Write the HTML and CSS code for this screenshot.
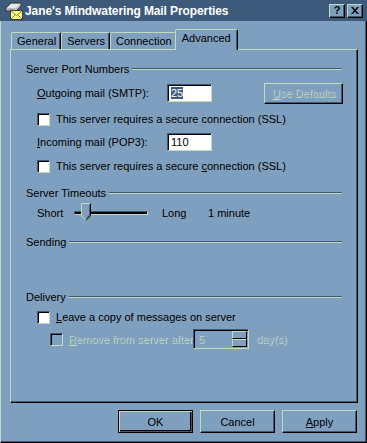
FILE: index.html
```html
<!doctype html>
<html>
<head>
    <meta charset="UTF-8">
    <title>Jane's Mindwatering Mail Properties</title>
    <link rel="stylesheet" href="styles.css">
</head>
<body>
<div class="window">
    <div class="titlebar">
        <svg class="app-icon" width="18" height="18" viewBox="0 0 18 18">
            <!-- server box -->
            <polygon points="1,6 6,1 16,1 16,4 11,9 1,9" fill="#c0c0c0" stroke="#404040" stroke-width="1"/>
            <polygon points="2,6 6,2 15,2 11,6" fill="#e8e8e8"/>
            <line x1="3" y1="8" x2="9" y2="8" stroke="#808080"/>
            <!-- envelope -->
            <rect x="5.5" y="8.5" width="12" height="9" fill="#ffff80" stroke="#404040"/>
            <polyline points="6,9 11.5,13.5 17,9" fill="none" stroke="#808040"/>
            <line x1="6" y1="17" x2="10" y2="13" stroke="#808040"/>
            <line x1="17" y1="17" x2="13" y2="13" stroke="#808040"/>
        </svg>
        <span class="title">Jane's Mindwatering Mail Properties</span>
        <div class="title-buttons">
            <span class="tbtn">?</span>
            <span class="tbtn tbtn-close">
                <svg width="8" height="7" viewBox="0 0 8 7"><path d="M0 0h2l2 2.5L6 0h2L5 3.5 8 7H6L4 4.5 2 7H0l3-3.5z" fill="#000"/></svg>
            </span>
        </div>
    </div>

    <div class="tabs">
        <div class="tab">General</div>
        <div class="tab">Servers</div>
        <div class="tab">Connection</div>
        <div class="tab active">Advanced</div>
    </div>

    <div class="panel">
        <div class="group">
            <span>Server Port Numbers</span><span class="rule"></span>
        </div>
        <div class="row row-port">
            <span class="label"><u>O</u>utgoing mail (SMTP):</span>
            <span class="field"><span class="selected">25</span></span>
            <span class="btn btn-disabled"><u>U</u>se Defaults</span>
        </div>
        <div class="row row-check">
            <span class="check"></span>
            <span>This server requires a secure connection (SSL)</span>
        </div>
        <div class="row row-port2">
            <span class="label"><u>I</u>ncoming mail (POP3):</span>
            <span class="field">110</span>
        </div>
        <div class="row row-check2">
            <span class="check"></span>
            <span>This server requires a secure <u>c</u>onnection (SSL)</span>
        </div>

        <div class="group group-timeouts">
            <span>Server Timeouts</span><span class="rule"></span>
        </div>
        <div class="row row-slider">
            <span class="slider-label">Short</span>
            <span class="track">
                <svg class="thumb" width="11" height="18" viewBox="0 0 11 18">
                    <path d="M0.5 0.5h9v12l-4.5 5-4.5-5z" fill="#7f9fbf" stroke="#c0dcc0"/>
                    <path d="M9.5 0.5v12l-4.5 5" fill="none" stroke="#000"/>
                    <path d="M8.5 1.5v10.5l-3.5 4" fill="none" stroke="#405878"/>
                </svg>
            </span>
            <span class="long">Long</span>
            <span>1 minute</span>
        </div>

        <div class="group group-sending">
            <span>Sending</span><span class="rule"></span>
        </div>

        <div class="group group-delivery">
            <span>Delivery</span><span class="rule"></span>
        </div>
        <div class="row row-leave">
            <span class="check"></span>
            <span><u>L</u>eave a copy of messages on server</span>
        </div>
        <div class="row row-remove">
            <span class="check check-disabled"></span>
            <span class="disabled remove-label"><u>R</u>emove from server after</span>
            <span class="spinner">
                <span class="spin-value disabled">5</span>
                <span class="spin-buttons">
                    <span class="spin-btn"><span class="arrow-up"></span></span>
                    <span class="spin-btn"><span class="arrow-down"></span></span>
                </span>
            </span>
            <span class="disabled">day(s)</span>
        </div>
    </div>

    <div class="buttons">
        <span class="btn btn-default">OK</span>
        <span class="btn">Cancel</span>
        <span class="btn"><u>A</u>pply</span>
    </div>
</div>
</body>
</html>
```

FILE: styles.css
```css
body {
    margin: 0;
    background: #7f9fbf;
    font-family: 'Liberation Sans', Arial, sans-serif;
    font-size: 11px;
    color: #000;
}
u {
    text-decoration: underline;
    text-underline-offset: 1px;
}
.window {
    width: 367px;
    height: 443px;
    box-sizing: border-box;
    background: #7f9fbf;
    border-left: 1px solid #c0dcc0;
    border-right: 1px solid #000;
    border-bottom: 1px solid #000;
    box-shadow: inset -1px -1px #405878;
}
.titlebar {
    height: 21px;
    margin-left: -1px;
    margin-right: -1px;
    background: #3d5a7a;
    display: flex;
    align-items: center;
    padding: 0 4px 0 5px;
}
.app-icon {
    margin-right: 2px;
}
.title {
    color: #fff;
    font-weight: bold;
    font-size: 12px;
    letter-spacing: -0.1px;
}
.title-buttons {
    margin-left: auto;
    display: flex;
    gap: 2px;
}
.tbtn {
    width: 14px;
    height: 12px;
    background: #7f9fbf;
    border: 1px solid;
    border-color: #c0dcc0 #000 #000 #c0dcc0;
    box-shadow: inset -1px -1px #405878;
    display: flex;
    align-items: center;
    justify-content: center;
    font-weight: bold;
    font-size: 11px;
    line-height: 1;
}
.tabs {
    display: flex;
    align-items: flex-end;
    height: 20px;
    margin-top: 8px;
    padding-left: 10px;
}
.tab {
    height: 16px;
    padding: 0 4px 0 5px;
    line-height: 17px;
    border-top: 1px solid #c0dcc0;
    border-left: 1px solid #c0dcc0;
    border-right: 1px solid #000;
    border-radius: 2px 2px 0 0;
    box-shadow: inset -1px 0 #405878;
    white-space: nowrap;
}
.tab.active {
    position: relative;
    height: 20px;
    margin: 0 -2px -1px -2px;
    padding: 0 6px 0 6px;
    line-height: 17px;
    background: #7f9fbf;
    z-index: 1;
}
.panel {
    margin-left: 9px;
    width: 348px;
    height: 354px;
    box-sizing: border-box;
    border-top: 1px solid #c0dcc0;
    border-left: 1px solid #c0dcc0;
    border-right: 1px solid #000;
    border-bottom: 1px solid #000;
    box-shadow: inset -1px -1px #405878;
    padding: 12px 15px 0 15px;
}
.group {
    display: flex;
    align-items: center;
    height: 14px;
    white-space: nowrap;
}
.rule {
    flex: 1;
    margin-left: 3px;
    border-top: 1px solid #405878;
    border-bottom: 1px solid #c0dcc0;
}
.row {
    display: flex;
    align-items: center;
    margin-left: 11px;
    white-space: nowrap;
}
.row-port { height: 20px; margin-top: 7px; }
.row-check { height: 14px; margin-top: 9px; }
.row-port2 { height: 20px; margin-top: 6px; }
.row-check2 { height: 14px; margin-top: 7px; }
.group-timeouts { margin-top: 13px; }
.row-slider { height: 20px; margin-top: 3px; }
.group-sending { margin-top: 12px; }
.group-delivery { margin-top: 41px; }
.row-leave { height: 14px; margin-top: 6px; }
.row-remove { height: 20px; margin-top: 5px; margin-left: 24px; }

.label {
    width: 130px;
}
.field {
    width: 40px;
    height: 15px;
    background: #fff;
    border: 1px solid;
    border-color: #405878 #c0dcc0 #c0dcc0 #405878;
    box-shadow: inset 1px 1px #000;
    padding: 1px 0 0 3px;
    line-height: 15px;
}
.selected {
    background: #3d5a7a;
    color: #fff;
}
.check {
    width: 11px;
    height: 11px;
    background: #fff;
    border: 1px solid;
    border-color: #405878 #c0dcc0 #c0dcc0 #405878;
    box-shadow: inset 1px 1px #000;
    margin-right: 6px;
    flex: none;
}
.check-disabled {
    background: #7f9fbf;
    margin-right: 5px;
}
.btn {
    width: 73px;
    height: 21px;
    box-sizing: content-box;
    background: #7f9fbf;
    border: 1px solid;
    border-color: #c0dcc0 #000 #000 #c0dcc0;
    box-shadow: inset -1px -1px #405878;
    display: flex;
    align-items: center;
    justify-content: center;
}
.btn-disabled {
    width: 77px;
    height: 19px;
    margin-left: auto;
    margin-right: -1px;
    color: #8aa4bc;
    text-shadow: 1px 1px #c0dcc0;
}
.disabled {
    color: #8aa4bc;
    text-shadow: 1px 1px #c0dcc0;
}
.slider-label {
    width: 37px;
}
.track {
    position: relative;
    width: 72px;
    height: 2px;
    border: 1px solid;
    border-color: #405878 #c0dcc0 #c0dcc0 #405878;
    background: #000;
}
.thumb {
    position: absolute;
    left: 6px;
    top: -9px;
}
.long {
    margin-left: 14px;
    width: 46px;
}
.remove-label {
    width: 125px;
}
.spinner {
    display: flex;
    width: 54px;
    height: 18px;
    border: 1px solid;
    border-color: #405878 #c0dcc0 #c0dcc0 #405878;
    box-shadow: inset 1px 1px #000;
    margin-right: 7px;
}
.spin-value {
    flex: 1;
    padding: 2px 0 0 4px;
    line-height: 15px;
}
.spin-buttons {
    display: flex;
    flex-direction: column;
    width: 15px;
    padding: 1px 1px 1px 0;
}
.spin-btn {
    flex: 1;
    border: 1px solid;
    border-color: #c0dcc0 #000 #000 #c0dcc0;
    display: flex;
    align-items: center;
    justify-content: center;
}
.arrow-up {
    border-left: 2px solid transparent;
    border-right: 2px solid transparent;
    border-bottom: 2px solid #8aa4bc;
}
.arrow-down {
    border-left: 2px solid transparent;
    border-right: 2px solid transparent;
    border-top: 2px solid #8aa4bc;
}
.buttons {
    display: flex;
    justify-content: flex-end;
    gap: 7px;
    margin-top: 7px;
    padding-right: 9px;
}
.btn-default {
    border: 1px solid #000;
    box-shadow: inset 1px 1px #c0dcc0, inset -1px -1px #405878, inset -2px -2px #000;
}
```
